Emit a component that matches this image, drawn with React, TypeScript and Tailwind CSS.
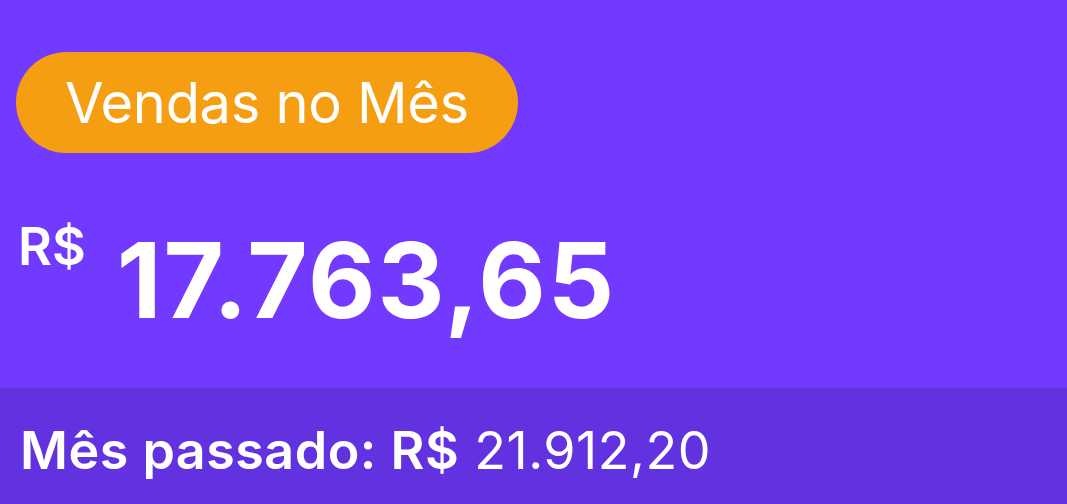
const App = () => {
  return (
    <div className="w-[1067px] h-[504px] bg-[#7239fe] flex flex-col font-['Inter',sans-serif] text-white overflow-hidden">
      {/* Topo */}
      <div className="flex-1 flex flex-col items-start pt-[52px] pl-4">
        <div className="h-[101px] px-[49px] rounded-full bg-[#f59e12] flex items-center">
          <span className="text-[56px] leading-none font-normal tracking-[-0.3px]">Vendas no Mês</span>
        </div>
        {/* Valor */}
        <div className="flex items-start mt-[75px] pl-[2px]">
          <span className="text-[52px] leading-none font-semibold mt-[-7px]">R$</span>
          <span className="text-[104px] leading-none font-bold ml-[31px] tracking-[2px]">17.763,65</span>
        </div>
      </div>
      {/* Rodape */}
      <div className="h-[116px] bg-[#6332e0] pl-5 pt-[37px]">
        <div className="text-[52px] leading-none tracking-[0.5px]">
          <span className="font-semibold">Mês passado: R$</span>{" "}
          <span className="font-normal">21.912,20</span>
        </div>
      </div>
    </div>
  );
};

export default App;
